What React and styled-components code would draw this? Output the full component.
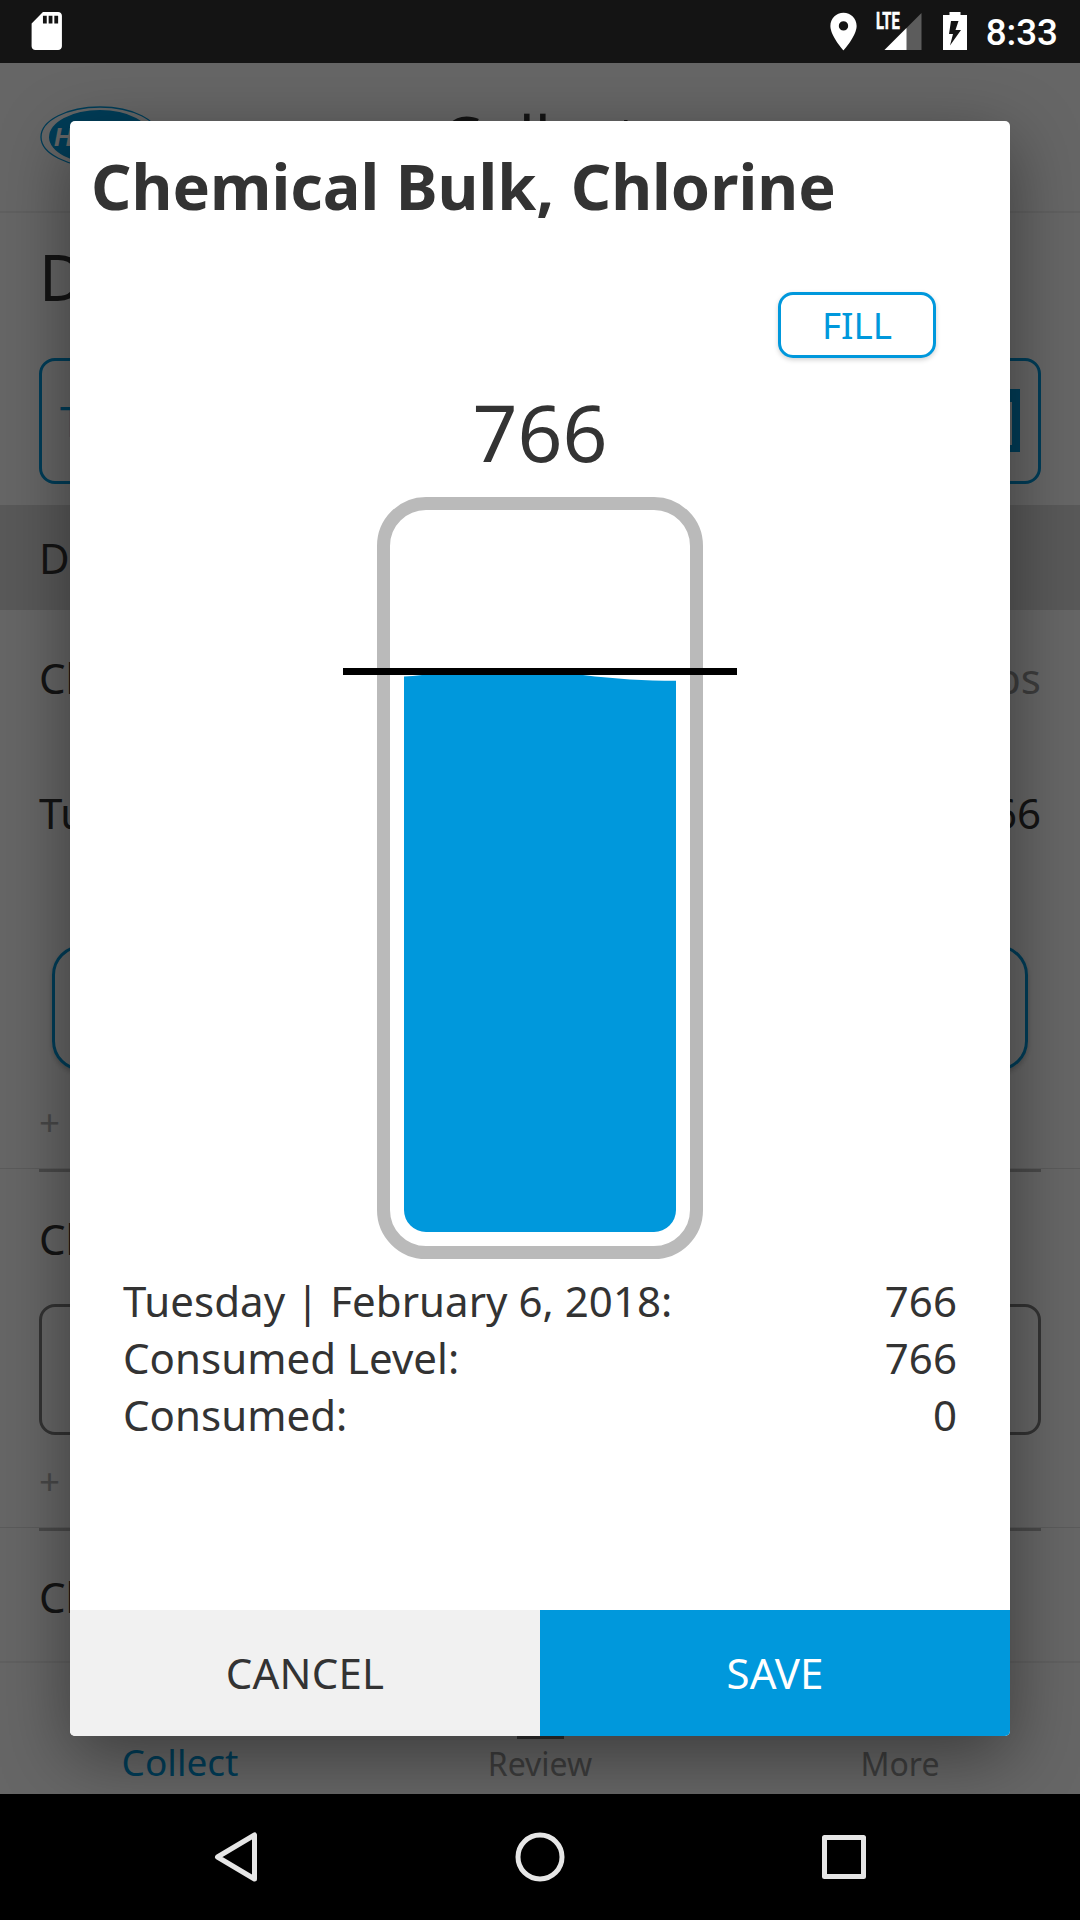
import React from "react";
import styled, { createGlobalStyle } from "styled-components";

const BLUE = "#0098dc";
const INK = "#333333";

const GlobalStyle = createGlobalStyle`
  *, *::before, *::after { box-sizing: border-box; }
  body { margin: 0; background: #000; }
  button { font: inherit; letter-spacing: inherit; cursor: pointer; }
  svg { display: block; }
`;

const Screen = styled.div`
  position: relative;
  display: flex;
  flex-direction: column;
  width: 1080px;
  height: 1920px;
  overflow: hidden;
  background: #fff;
  color: ${INK};
  font-family: "Noto Sans", "Open Sans", sans-serif;
  font-size: 42px;
  line-height: 57px;
`;

/* ---------- system bars ---------- */

const StatusBar = styled.header`
  position: relative;
  z-index: 3;
  flex: none;
  display: flex;
  justify-content: space-between;
  height: 63px;
  padding: 0 22px 0 24px;
  background: #141414;
  color: #fff;
`;

const StatusGroup = styled.div`
  display: flex;
  align-items: flex-start;
`;

const StatusIcon = styled.svg`
  margin: ${(p) => p.$m};
  flex: none;
`;

const Signal = styled.div`
  position: relative;
  width: 46px;
  height: 37px;
  margin: 13px 21px 0 10px;
`;

const NetworkType = styled.span`
  position: absolute;
  left: 0;
  top: -3px;
  font: 700 23px/23px Roboto, sans-serif;
  transform: scaleX(0.64);
  transform-origin: left;
  -webkit-text-stroke: 0.6px #fff;
`;

const Clock = styled.span`
  margin: 11px 0 0 18px;
  font: 500 36.75px/43px Roboto, sans-serif;
`;

const NavBar = styled.nav`
  position: relative;
  z-index: 3;
  flex: none;
  display: flex;
  justify-content: center;
  align-items: center;
  gap: 244px;
  height: 126px;
  background: #000;
`;

/* ---------- page behind the dialog ---------- */

const Page = styled.main`
  flex: 1;
  display: flex;
  flex-direction: column;
  min-height: 0;
`;

const AppHeader = styled.div`
  display: grid;
  grid-template-columns: 1fr auto 1fr;
  align-items: center;
  height: 150px;
  padding: 0 39px;
  border-bottom: 2px solid #f0f0f0;
`;

const AppTitle = styled.h1`
  margin: 0;
  font-size: 62.5px;
  line-height: 86px;
  font-weight: 400;
`;

const Heading = styled.h2`
  height: 145px;
  margin: 0;
  padding: 21px 39px 0;
  font-size: 63px;
  line-height: 86px;
  font-weight: 400;
`;

const Field = styled.div`
  display: flex;
  align-items: center;
  justify-content: space-between;
  height: ${(p) => p.$h}px;
  margin: 0 39px;
  padding: 0 18px 1px;
  border: 3px solid ${(p) => p.$c};
  border-radius: 16px;
  color: ${BLUE};
`;

const Band = styled.div`
  display: flex;
  align-items: center;
  height: 105px;
  margin-top: 21px;
  padding: 0 39px;
  background: #dfdfdf;
`;

const Row = styled.div`
  display: flex;
  align-items: center;
  justify-content: space-between;
  height: ${(p) => p.$h}px;
  padding: 0 39px;
`;

const Unit = styled.span`
  color: #999;
`;

const WideButton = styled.div`
  height: 126px;
  margin: 65px 52px 6px;
  border: 3px solid ${BLUE};
  border-radius: 30px;
  box-shadow: 0 3px 5px rgba(0, 0, 0, 0.2);
`;

const AddNote = styled.div`
  display: flex;
  align-items: center;
  height: ${(p) => p.$h}px;
  padding: 0 39px;
  color: #b4b4b4;
  font-size: 36.75px;
`;

const Divider = styled.div`
  height: 4px;
  padding: 0 39px;
  border-top: 1px solid #e4e4e4;
  &::before {
    content: "";
    display: block;
    height: 3px;
    background: #b8b8b8;
  }
`;

const TabBar = styled.div`
  flex: 1;
  display: grid;
  grid-template-columns: repeat(3, 1fr);
  border-top: 2px solid #f0f0f0;
`;

const Tab = styled.div`
  display: flex;
  flex-direction: column;
  align-items: center;
  justify-content: flex-end;
  padding-bottom: ${(p) => (p.$active ? 7 : 5)}px;
  color: ${(p) => (p.$active ? BLUE : "#999")};
  font-size: ${(p) => (p.$active ? 37 : 32)}px;
  line-height: 50px;
`;

const TabGlyph = styled.i`
  width: 47px;
  height: 32px;
  border: 4px solid #777;
`;

/* ---------- dialog ---------- */

const Backdrop = styled.div`
  position: absolute;
  z-index: 2;
  inset: 63px 0 126px;
  padding: 58px 70px;
  background: rgba(0, 0, 0, 0.6);
`;

const Dialog = styled.section`
  display: flex;
  flex-direction: column;
  height: 1615px;
  overflow: hidden;
  border-radius: 5px;
  background: #fff;
  box-shadow: 0 20px 70px rgba(0, 0, 0, 0.42);
`;

const DialogTitle = styled.h2`
  margin: 0;
  padding: 22px 21px 0;
  font-size: 63px;
  line-height: 86px;
  font-weight: 700;
`;

const FillButton = styled.button`
  align-self: flex-end;
  width: 158px;
  height: 66px;
  margin: 63px 74px 0 0;
  padding: 0;
  border: 3px solid ${BLUE};
  border-radius: 15px;
  background: #fff;
  color: ${BLUE};
  font-size: 36.75px;
  line-height: 50px;
  box-shadow: 0 2px 5px rgba(0, 0, 0, 0.18);
`;

const Level = styled.output`
  margin-top: 20px;
  text-align: center;
  font-size: 78.75px;
  line-height: 107px;
`;

const TankDrawing = styled.svg`
  align-self: center;
  margin-top: 12px;
`;

const Summary = styled.dl`
  flex: 1;
  margin: 0;
  padding: 13px 53px 0;
  letter-spacing: 0.04px;
`;

const SummaryRow = styled.div`
  display: flex;
  justify-content: space-between;
`;

const Term = styled.dt``;
const Value = styled.dd`
  margin: 0;
`;

const Actions = styled.footer`
  display: grid;
  grid-template-columns: 1fr 1fr;
  height: 126px;
`;

const Action = styled.button`
  padding: 0 0 1px;
  border: 0;
  background: ${(p) => (p.$primary ? BLUE : "#f1f1f1")};
  color: ${(p) => (p.$primary ? "#fff" : INK)};
  letter-spacing: ${(p) => (p.$primary ? 0 : 0.2)}px;
`;

function Logo() {
  return (
    <svg width="120" height="62" viewBox="0 0 120 62">
      <ellipse cx="61" cy="31" rx="59" ry="30" fill="none" stroke={BLUE} strokeWidth="1.3" />
      <ellipse cx="61" cy="31" rx="51" ry="27" fill={BLUE} />
      <text x="15" y="39.5" fill="#fff" fontFamily="Liberation Sans, sans-serif" fontSize="26" fontWeight="700" fontStyle="italic">
        HACH
      </text>
    </svg>
  );
}

function Calendar() {
  return (
    <svg width="63" height="63" viewBox="0 0 63 63">
      <path fill={BLUE} fillRule="evenodd" d="M0 0H63V63H0ZM8 13V56H55V13Z" />
    </svg>
  );
}

function Tank() {
  return (
    <TankDrawing width="394" height="762" viewBox="343 497 394 762">
      <rect x="383.5" y="503.5" width="313" height="749" rx="42.5" fill="none" stroke="#bababa" strokeWidth="13" />
      <path
        fill={BLUE}
        d="M404 676.6Q412 676 422 675C460 671 545 671 583 675C615 679 645 680.8 676 680.8V1210A22 22 0 0 1 654 1232H426A22 22 0 0 1 404 1210Z"
      />
      <rect x="343" y="668" width="394" height="7" fill="#000" />
    </TankDrawing>
  );
}

const summary = [
  ["Tuesday | February 6, 2018:", "766"],
  ["Consumed Level:", "766"],
  ["Consumed:", "0"],
];

export default function App() {
  return (
    <>
      <GlobalStyle />
      <Screen>
        <StatusBar>
          <StatusIcon $m="8px 0 0 0" width="45.5" height="46" viewBox="0 0 24 24" fill="#fff">
            <path d="M18 2h-8L4.02 8 4 20c0 1.1.9 2 2 2h12c1.1 0 2-.9 2-2V4c0-1.1-.9-2-2-2zm-6 6h-2V4h2v4zm3 0h-2V4h2v4zm3 0h-2V4h2v4z" />
          </StatusIcon>
          <StatusGroup>
            <StatusIcon $m="9px 0 0 0" width="45" height="45" viewBox="0 0 24 24" fill="#fff">
              <path d="M12 2C8.13 2 5 5.13 5 9c0 5.25 7 13 7 13s7-7.75 7-13c0-3.87-3.13-7-7-7zm0 9.5a2.5 2.5 0 1 1 0-5 2.5 2.5 0 0 1 0 5z" />
            </StatusIcon>
            <Signal>
              <svg width="46" height="37" viewBox="0 0 46 37">
                <path d="M45.5 0V37H8.5Z" fill="#5c5c5c" />
                <path d="M30.5 15V37H8.5Z" fill="#fff" />
              </svg>
              <NetworkType>LTE</NetworkType>
            </Signal>
            <StatusIcon $m="12px 0 0 0" width="25" height="38" viewBox="0 0 25 38">
              <path fill="#fff" d="M6.5 0H17.5V3H24V38H0V3H6.5Z" />
              <path fill="#141414" d="M8 9H15.5L12.5 18H18L7 33.5L10 22H6Z" />
            </StatusIcon>
            <Clock>8:33</Clock>
          </StatusGroup>
        </StatusBar>

        <Page>
          <AppHeader>
            <Logo />
            <AppTitle>Collect</AppTitle>
          </AppHeader>
          <Heading>Data</Heading>
          <Field $h={126} $c={BLUE}>
            <span>Tuesday</span>
            <Calendar />
          </Field>
          <Band>Daily</Band>
          <Row $h={134}>
            <span>Chlorine</span>
            <Unit>lbs</Unit>
          </Row>
          <Row $h={136}>
            <span>Tuesday</span>
            <span>766</span>
          </Row>
          <WideButton />
          <AddNote $h={91}>+</AddNote>
          <Divider />
          <Row $h={132}>Chlorine</Row>
          <Field $h={131} $c="#808080" />
          <AddNote $h={92}>+</AddNote>
          <Divider />
          <Row $h={130}>Chlorine</Row>
          <TabBar>
            <Tab $active>Collect</Tab>
            <Tab>
              <TabGlyph />
              Review
            </Tab>
            <Tab>More</Tab>
          </TabBar>
        </Page>

        <Backdrop>
          <Dialog>
            <DialogTitle>Chemical Bulk, Chlorine</DialogTitle>
            <FillButton>FILL</FillButton>
            <Level>766</Level>
            <Tank />
            <Summary>
              {summary.map(([term, value]) => (
                <SummaryRow key={term}>
                  <Term>{term}</Term>
                  <Value>{value}</Value>
                </SummaryRow>
              ))}
            </Summary>
            <Actions>
              <Action>CANCEL</Action>
              <Action $primary>SAVE</Action>
            </Actions>
          </Dialog>
        </Backdrop>

        <NavBar>
          <svg width="60" height="60" viewBox="0 0 60 60" fill="none" stroke="#e6e6e6" strokeWidth="5" strokeLinejoin="round">
            <path d="M48.5 8V52L11.5 30Z" />
          </svg>
          <svg width="60" height="60" viewBox="0 0 60 60" fill="none" stroke="#e6e6e6" strokeWidth="5">
            <circle cx="30" cy="30" r="22" />
          </svg>
          <svg width="60" height="60" viewBox="0 0 60 60" fill="none" stroke="#e6e6e6" strokeWidth="5" strokeLinejoin="round">
            <rect x="10.5" y="10.5" width="39" height="39" />
          </svg>
        </NavBar>
      </Screen>
    </>
  );
}
